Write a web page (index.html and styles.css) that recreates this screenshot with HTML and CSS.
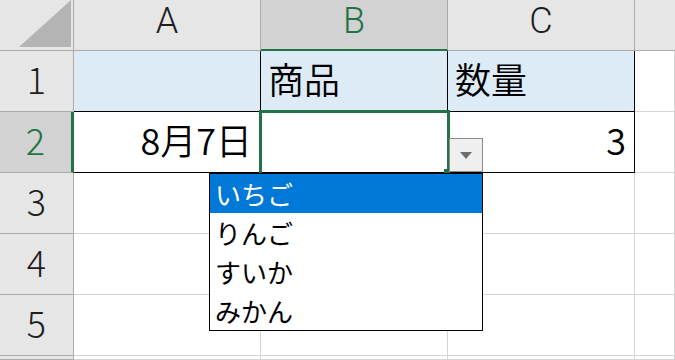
FILE: index.html
```html
<!DOCTYPE html>
<html>
<head>
	<meta charset="utf-8">
	<title>Sheet1</title>
	<link rel="stylesheet" href="styles.css">
</head>
<body>
	<div class="sheet">
		<div class="corner"><div class="corner-tri"></div></div>
		<div class="col-hdr">A</div>
		<div class="col-hdr sel">B</div>
		<div class="col-hdr">C</div>
		<div class="col-hdr last"></div>

		<div class="row-hdr">1</div>
		<div class="cell head"></div>
		<div class="cell head">商品</div>
		<div class="cell head">数量</div>
		<div class="cell"></div>

		<div class="row-hdr sel">2</div>
		<div class="cell boxed num">8月7日</div>
		<div class="cell boxed"></div>
		<div class="cell boxed num">3</div>
		<div class="cell"></div>

		<div class="row-hdr">3</div>
		<div class="cell"></div>
		<div class="cell"></div>
		<div class="cell"></div>
		<div class="cell"></div>

		<div class="row-hdr">4</div>
		<div class="cell"></div>
		<div class="cell"></div>
		<div class="cell"></div>
		<div class="cell"></div>

		<div class="row-hdr">5</div>
		<div class="cell"></div>
		<div class="cell"></div>
		<div class="cell"></div>
		<div class="cell"></div>

		<div class="row-hdr"></div>
		<div class="cell"></div>
		<div class="cell"></div>
		<div class="cell"></div>
		<div class="cell"></div>

		<!-- active cell B2 with its list -->
		<div class="selection"></div>
		<div class="fill-handle"></div>
		<div class="drop-btn"><span class="arrow"></span></div>
		<ul class="drop-list">
			<li class="active">いちご</li>
			<li>りんご</li>
			<li>すいか</li>
			<li>みかん</li>
		</ul>
	</div>
</body>
</html>
```

FILE: styles.css
```css
html, body {
  margin: 0;
  padding: 0;
  height: 100%;
  overflow: hidden;
  background: #fff;
}

body {
  font-family: "Noto Sans CJK JP", sans-serif;
  font-weight: 300;
  color: #1e1e1e;
}

.sheet {
  position: relative;
  height: 360px;
  display: grid;
  grid-template-columns: 74px 187px 187px 187px 1fr;
  grid-template-rows: 51px repeat(5, 61px) 1fr;
}

.sheet > div {
  box-sizing: border-box;
}

/* headers */
.corner,
.col-hdr,
.row-hdr {
  background: #e6e6e6;
  border-right: 1px solid #ababab;
  border-bottom: 1px solid #ababab;
}

.corner {
  display: flex;
  justify-content: flex-end;
  align-items: flex-end;
  padding: 0 2px 3px 0;
}

.corner-tri {
  width: 52px;
  height: 47px;
  background: #b4b4b4;
  clip-path: polygon(100% 0, 100% 100%, 0 100%);
}

.col-hdr {
  text-align: center;
  font-family: Roboto, "Noto Sans CJK JP", sans-serif;
  font-size: 36px;
  line-height: 43px;
}

.col-hdr.last {
  border-right: none;
}

.row-hdr {
  text-align: center;
  font-size: 36px;
  line-height: 55px;
}

.col-hdr.sel,
.row-hdr.sel {
  background: #d2d2d2;
  color: #217346;
}

.col-hdr.sel {
  border-bottom: 2px solid #217346;
}

.row-hdr.sel {
  border-right: 3px solid #217346;
}

/* cells */
.cell {
  padding: 0 8px 0 7px;
  border-right: 1px solid #d4d4d4;
  border-bottom: 1px solid #d4d4d4;
  font-size: 36px;
  font-weight: 350;
  line-height: 55px;
  color: #000;
}

.cell.head {
  background: #ddebf7;
  border-color: #000;
}

.cell.boxed {
  border-color: #000;
}

.cell.num {
  text-align: right;
}

/* overlays on the active cell */
.selection {
  position: absolute;
  left: 259px;
  top: 110px;
  width: 191px;
  height: 63px;
  border: 3px solid #217346;
  border-bottom: none;
}

.fill-handle {
  position: absolute;
  left: 444px;
  top: 169px;
  width: 6px;
  height: 6px;
  background: #217346;
}

.drop-btn {
  position: absolute;
  left: 449px;
  top: 138px;
  width: 34px;
  height: 34px;
  border: 1px solid #8c8c8c;
  background: #efefef;
  display: flex;
  justify-content: center;
  align-items: center;
}

.arrow {
  width: 0;
  height: 0;
  border-left: 6px solid transparent;
  border-right: 6px solid transparent;
  border-top: 7px solid #6d6d6d;
}

.drop-list {
  position: absolute;
  left: 209px;
  top: 173px;
  width: 274px;
  margin: 0;
  padding: 0;
  list-style: none;
  background: #fff;
  border: 1px solid #000;
  box-sizing: border-box;
}

.drop-list li {
  height: 39px;
  line-height: 39px;
  padding-left: 5px;
  font-size: 26px;
  font-weight: 400;
  color: #000;
}

.drop-list li.active {
  background: #0078d7;
  color: #fff;
}
```
